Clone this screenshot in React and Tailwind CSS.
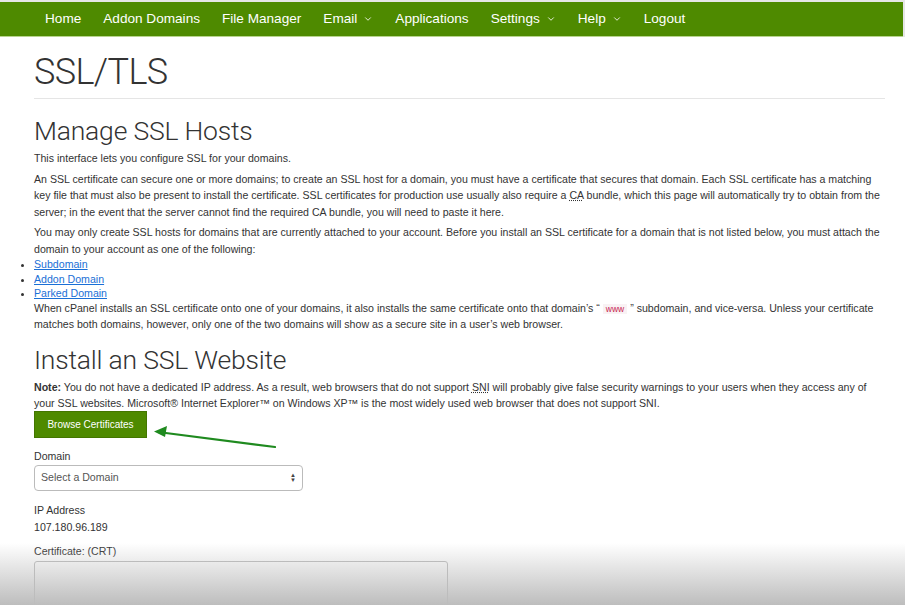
import { ChevronDown } from 'lucide-react';

const navItems = [
  { name: 'Home' },
  { name: 'Addon Domains' },
  { name: 'File Manager' },
  { name: 'Email', menu: true },
  { name: 'Applications' },
  { name: 'Settings', menu: true },
  { name: 'Help', menu: true },
  { name: 'Logout' },
];

const sans = { fontFamily: '"Liberation Sans", Arial, Helvetica, sans-serif' };
const light = { fontFamily: 'Roboto, "Liberation Sans", sans-serif' };

const App = () => {
  return (
    <div className="relative h-[605px] w-[905px] overflow-hidden bg-white text-[#333]" style={sans}>
      {/* Top nav */}
      <div className="pt-[2px] pr-[2px] bg-[#e6e6e6]">
        <nav className="flex items-center h-[35px] pl-[45px] gap-[22px] bg-[#4e8a00] border-b border-[#b8d48e]">
          {navItems.map((item) => (
            <span key={item.name} className="flex items-center gap-[6px] text-[13.6px] text-white">
              {item.name}
              {item.menu && <ChevronDown className="w-[10px] h-[10px]" strokeWidth={2} />}
            </span>
          ))}
        </nav>
      </div>

      <main className="pl-[34px] pr-[20px]">
        <h1 className="mt-[15px] text-[36px] leading-[40px] font-light tracking-[-0.6px] text-[#333]" style={light}>
          SSL/TLS
        </h1>
        <hr className="mt-[6px] border-t border-[#e5e5e5]" />

        <h2 className="mt-[16px] text-[26.5px] leading-[32px] font-light tracking-[-0.2px] text-[#333]" style={light}>
          Manage SSL Hosts
        </h2>
        <div className="text-[10.6px] leading-[16.5px] text-[#333]">
          <p className="mt-[3px]">This interface lets you configure SSL for your domains.</p>
          <p className="mt-[4px]">
            An SSL certificate can secure one or more domains; to create an SSL host for a domain, you must have a
            certificate that secures that domain. Each SSL certificate has a matching key file that must also be present
            to install the certificate. SSL certificates for production use usually also require a{' '}
            <abbr className="underline decoration-dotted">CA</abbr> bundle, which this page will automatically try to
            obtain from the server; in the event that the server cannot find the required CA bundle, you will need to
            paste it here.
          </p>
          <p className="mt-[4px]">
            You may only create SSL hosts for domains that are currently attached to your account. Before you install an
            SSL certificate for a domain that is not listed below, you must attach the domain to your account as one of
            the following:
          </p>
          <ul className="list-disc leading-[14.5px]">
            <li><a className="text-[#1a6fd6] underline">Subdomain</a></li>
            <li><a className="text-[#1a6fd6] underline">Addon Domain</a></li>
            <li><a className="text-[#1a6fd6] underline">Parked Domain</a></li>
          </ul>
          <p className="leading-[15.5px]">
            When cPanel installs an SSL certificate onto one of your domains, it also installs the same certificate onto
            that domain’s “ <code className="px-[3px] bg-[#f9f2f4] text-[#c7254e] text-[8.5px]" style={sans}>www</code> ”
            subdomain, and vice-versa. Unless your certificate matches both domains, however, only one of the two domains
            will show as a secure site in a user’s web browser.
          </p>
        </div>

        <h2 className="mt-[11px] text-[26.5px] leading-[32px] font-light tracking-[-0.2px] text-[#333]" style={light}>
          Install an SSL Website
        </h2>
        <p className="mt-[3px] max-w-[845px] text-[10.6px] leading-[16px]">
          <strong>Note:</strong> You do not have a dedicated IP address. As a result, web browsers that do not support{' '}
          <abbr className="underline decoration-dotted">SNI</abbr> will probably give false security warnings to your
          users when they access any of your SSL websites. Microsoft® Internet Explorer™ on Windows XP™ is the most
          widely used web browser that does not support SNI.
        </p>

        <div className="relative">
          <button className="h-[27px] w-[113px] bg-[#4e8a00] text-white text-[10px] border border-[#437600]">
            Browse Certificates
          </button>
          {/* annotation arrow */}
          <svg className="absolute left-[116px] top-[10px]" width="130" height="28" viewBox="0 0 130 28">
            <path d="M125 26 L8 11" stroke="#1f8a1f" strokeWidth="2.2" fill="none" strokeLinecap="round" />
            <path d="M4 10.5 L17 5 L15 16 Z" fill="#1f8a1f" />
          </svg>
        </div>

        <label className="block mt-[10px] text-[10.6px] leading-[16px]">Domain</label>
        <div className="mt-[1px] flex items-center justify-between w-[269px] h-[26px] px-[6px] border border-[#bbb] rounded-[4px] text-[10.6px] text-[#555]">
          <span>Select a Domain</span>
          <span className="flex flex-col text-[6px] leading-[5px] text-[#444]">
            <span>▲</span>
            <span>▼</span>
          </span>
        </div>

        <div className="mt-[11px] text-[10.6px] leading-[16px]">IP Address</div>
        <div className="mt-[1px] text-[10.6px] leading-[16px]">107.180.96.189</div>

        <div className="mt-[8px] text-[10.6px] leading-[16px]">Certificate: (CRT)</div>
        <div className="mt-[2px] w-[414px] h-[60px] border border-[#bbb] rounded-[3px]" />
      </main>

      {/* bottom fade from the screen capture */}
      <div className="pointer-events-none absolute bottom-0 left-0 right-0 h-[62px] bg-gradient-to-b from-white/0 to-[#bdbdbd]" />
    </div>
  );
};

export default App;
